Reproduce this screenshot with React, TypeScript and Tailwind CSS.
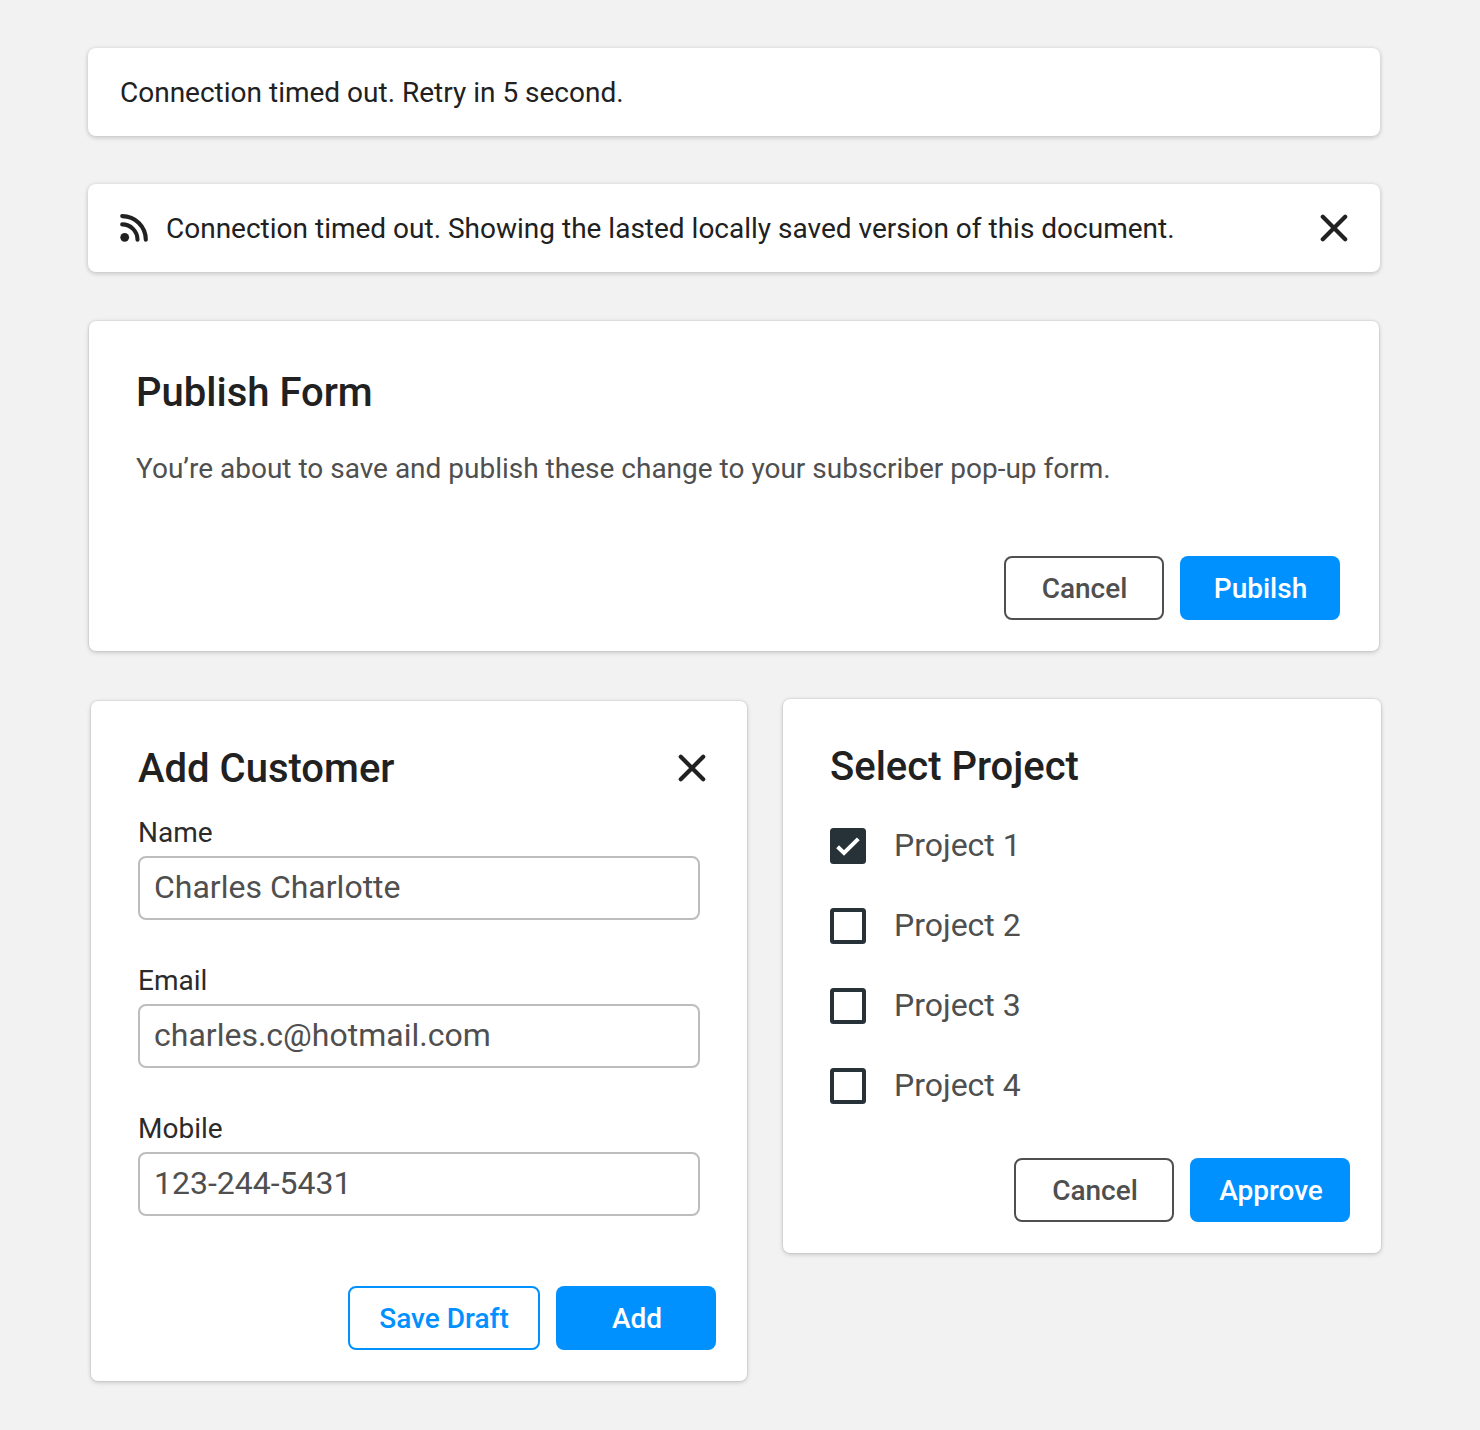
import React from "react";

const card = "bg-white rounded-[8px] shadow-[0_0_4px_rgba(0,0,0,0.1),0_2px_5px_rgba(0,0,0,0.14)]";
const panel = "bg-white rounded-[7px] shadow-[0_0_0_1px_rgba(0,0,0,0.04),0_0_4px_rgba(0,0,0,0.08),0_2px_5px_rgba(0,0,0,0.13)]";
const solid = "flex h-16 w-40 items-center justify-center rounded-[8px] bg-[#0091ff] pt-[2px] pl-[2px] text-[28px] font-medium text-white";

function CloseIcon() {
  return (
    <svg width="28" height="28" viewBox="0 0 28 28" fill="none" stroke="#212121" strokeWidth="4.2" strokeLinecap="round">
      <path d="M2.8 2.8 25.2 25.2M25.2 2.8 2.8 25.2" />
    </svg>
  );
}

function Field({ label, value }: { label: string; value: string }) {
  return (
    <div className="mb-10 w-[562px]">
      <div className="h-[40px] pt-px text-[28px] leading-[40px] text-[#2b2b2b]">{label}</div>
      <div className="mt-1 flex h-16 items-center rounded-[8px] border-2 border-[#bdbdbd] px-[14px] pb-[2px] text-[32px] text-[#4f4f4f]">{value}</div>
    </div>
  );
}

function Project({ n, checked }: { n: number; checked?: boolean }) {
  return (
    <div className="flex h-20 items-center gap-[28px]">
      <svg width="36" height="36" viewBox="0 0 36 36" fill="none">
        <rect x="2" y="2" width="32" height="32" rx="1.5" stroke="#263238" strokeWidth="4" fill={checked ? "#263238" : "white"} />
        {checked && <path d="M7.6 18.8 14 25 28.3 10.8" stroke="white" strokeWidth="4" />}
      </svg>
      <span className="pb-[2px] text-[32px] leading-[40px] text-[#4f4f4f]">Project {n}</span>
    </div>
  );
}

function Cancel() {
  return <button className="flex h-16 w-40 items-center justify-center rounded-[8px] border-2 border-[#4f4f4f] pt-[2px] pl-[2px] text-[28px] font-medium text-[#4f4f4f]">Cancel</button>;
}

export default function App() {
  return (
    <main className="h-[1430px] w-[1480px] overflow-hidden bg-[#f2f2f2] pt-12 pl-[88px] font-['Roboto',sans-serif] text-[#212121]">
      <section className={card + " flex h-[88px] w-[1292px] items-center px-8 pt-[2px] text-[28px]"}>Connection timed out. Retry in 5 second.</section>
      <section className={card + " mt-12 flex h-[88px] w-[1292px] items-center px-8 text-[28px]"}>
        <svg className="mr-[18px]" width="28" height="28" viewBox="0 0 28 28" fill="none" stroke="#212121" strokeWidth="4.1" strokeLinecap="round">
          <circle cx="4.7" cy="23.3" r="4.4" fill="#212121" stroke="none" />
          <path d="M2.2 10.4A15.3 15.3 0 0 1 17.5 25.7M2.2 2.1A23.6 23.6 0 0 1 25.8 25.7" />
        </svg>
        <span className="pt-[2px]">Connection timed out. Showing the lasted locally saved version of this document.</span>
        <span className="ml-auto"><CloseIcon /></span>
      </section>
      <section className={panel + " mt-[49px] ml-px flex h-[330px] w-[1290px] flex-col pt-[48px] pl-[47px]"}>
        <h1 className="text-[40px] leading-[48px] font-medium">Publish Form</h1>
        <p className="mt-[32px] text-[28px] leading-[40px] text-[#4f4f4f]">You’re about to save and publish these change to your subscriber pop-up form.</p>
        <div className="mt-[67px] mr-[39.5px] flex justify-end gap-4">
          <Cancel />
          <button className={solid}>Pubilsh</button>
        </div>
      </section>
      <div className="mt-[48px] ml-[3px] flex items-start">
        <section className={panel + " mt-[2px] h-[680px] w-[656px] pt-[43px] pl-[47px]"}>
          <div className="flex h-12 items-center justify-between pr-[41px]">
            <h2 className="pt-[2px] text-[40px] font-medium">Add Customer</h2>
            <CloseIcon />
          </div>
          <div className="mt-[20px]">
            <Field label="Name" value="Charles Charlotte" />
            <Field label="Email" value="charles.c@hotmail.com" />
            <Field label="Mobile" value="123-244-5431" />
          </div>
          <div className="mt-[70px] mr-[31px] flex justify-end gap-4">
            <button className="flex h-16 w-48 items-center justify-center rounded-[8px] border-2 border-[#0091ff] pt-[2px] text-[28px] font-medium text-[#0091ff]">Save Draft</button>
            <button className={solid}>Add</button>
          </div>
        </section>
        <section className={panel + " ml-[36px] h-[554px] w-[598px] pt-[44px] pl-[47px]"}>
          <h2 className="text-[40px] leading-[48px] font-medium">Select Project</h2>
          <div className="mt-[15px]">
            <Project n={1} checked />
            <Project n={2} />
            <Project n={3} />
            <Project n={4} />
          </div>
          <div className="mt-[32px] mr-[31px] flex justify-end gap-4">
            <Cancel />
            <button className={solid}>Approve</button>
          </div>
        </section>
      </div>
    </main>
  );
}
